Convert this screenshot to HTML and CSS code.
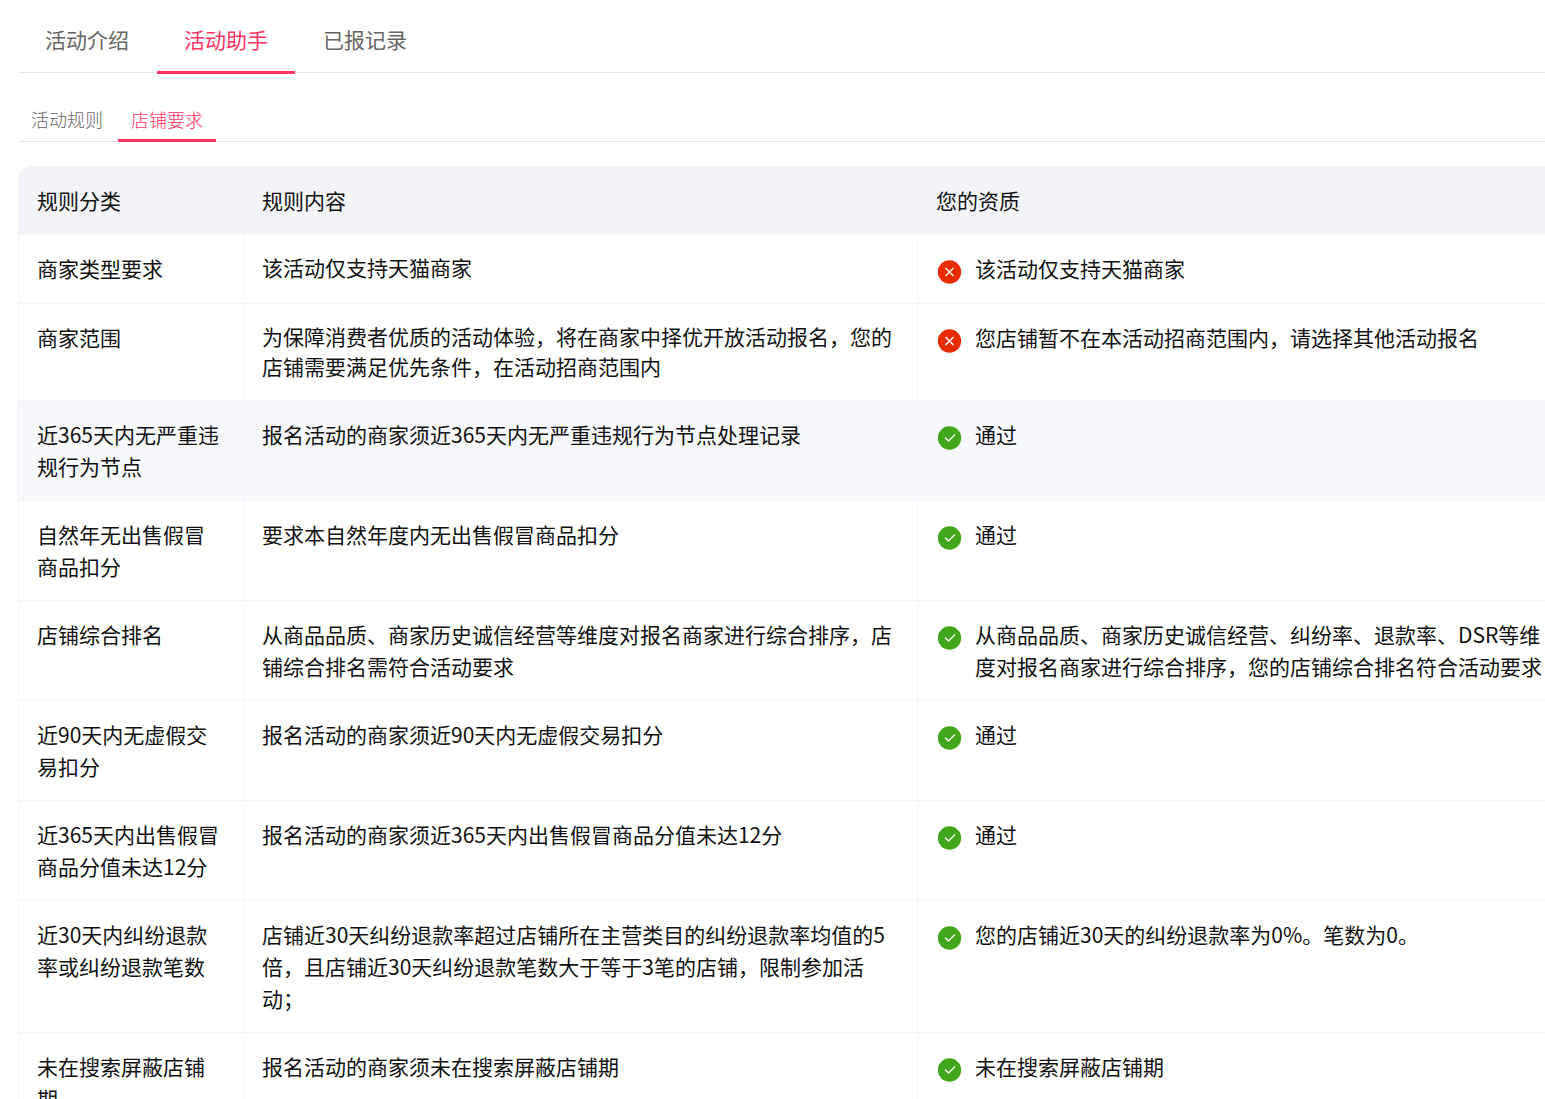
FILE: index.html
```html
<!DOCTYPE html>
<html lang="zh-CN">
<head>
<meta charset="utf-8">
<meta name="viewport" content="width=device-width, initial-scale=1">
<title>活动助手</title>
<link rel="stylesheet" href="styles.css">
</head>
<body>
<svg class="sprite" aria-hidden="true">
  <symbol id="fail" viewBox="0 0 24 24"><circle cx="11.500" cy="12" r="11.700" fill="#e62c00"/><path d="M7.500 8l8 8M15.500 8l-8 8" fill="none" stroke="#fff" stroke-width="1.4"/></symbol>
  <symbol id="pass" viewBox="0 0 24 24"><circle cx="11.500" cy="12" r="11.700" fill="#41a71a"/><path d="M7 11.500l3.500 3.500 6.500-6.500" fill="none" stroke="#fff" stroke-width="1.4"/></symbol>
</svg>
<main class="panel">
  <div class="tabs" role="tablist">
    <button class="tab" role="tab" type="button">活动介绍</button>
    <button class="tab active" role="tab" type="button" aria-selected="true">活动助手</button>
    <button class="tab" role="tab" type="button">已报记录</button>
  </div>
  <div class="tabs subtabs" role="tablist">
    <button class="tab" role="tab" type="button">活动规则</button>
    <button class="tab active" role="tab" type="button" aria-selected="true">店铺要求</button>
  </div>
  <table class="rules">
    <colgroup><col class="col-type"><col class="col-content"><col></colgroup>
    <thead>
      <tr><th scope="col">规则分类</th><th scope="col">规则内容</th><th scope="col">您的资质</th></tr>
    </thead>
    <tbody>
      <tr class="basic">
        <td>商家类型要求</td>
        <td>该活动仅支持天猫商家</td>
        <td><div class="result"><svg class="icon"><use href="#fail"/></svg><span>该活动仅支持天猫商家</span></div></td>
      </tr>
      <tr class="basic">
        <td>商家范围</td>
        <td>为保障消费者优质的活动体验，将在商家中择优开放活动报名，您的店铺需要满足优先条件，在活动招商范围内</td>
        <td><div class="result"><svg class="icon"><use href="#fail"/></svg><span>您店铺暂不在本活动招商范围内，请选择其他活动报名</span></div></td>
      </tr>
      <tr class="hovered">
        <td>近365天内无严重违规行为节点</td>
        <td>报名活动的商家须近365天内无严重违规行为节点处理记录</td>
        <td><div class="result"><svg class="icon"><use href="#pass"/></svg><span>通过</span></div></td>
      </tr>
      <tr>
        <td>自然年无出售假冒商品扣分</td>
        <td>要求本自然年度内无出售假冒商品扣分</td>
        <td><div class="result"><svg class="icon"><use href="#pass"/></svg><span>通过</span></div></td>
      </tr>
      <tr>
        <td>店铺综合排名</td>
        <td>从商品品质、商家历史诚信经营等维度对报名商家进行综合排序，店铺综合排名需符合活动要求</td>
        <td><div class="result"><svg class="icon"><use href="#pass"/></svg><span>从商品品质、商家历史诚信经营、纠纷率、退款率、DSR等维度对报名商家进行综合排序，您的店铺综合排名符合活动要求</span></div></td>
      </tr>
      <tr>
        <td>近90天内无虚假交易扣分</td>
        <td>报名活动的商家须近90天内无虚假交易扣分</td>
        <td><div class="result"><svg class="icon"><use href="#pass"/></svg><span>通过</span></div></td>
      </tr>
      <tr>
        <td>近365天内出售假冒商品分值未达12分</td>
        <td>报名活动的商家须近365天内出售假冒商品分值未达12分</td>
        <td><div class="result"><svg class="icon"><use href="#pass"/></svg><span>通过</span></div></td>
      </tr>
      <tr>
        <td>近30天内纠纷退款率或纠纷退款笔数</td>
        <td>店铺近30天纠纷退款率超过店铺所在主营类目的纠纷退款率均值的5倍，且店铺近30天纠纷退款笔数大于等于3笔的店铺，限制参加活动；</td>
        <td><div class="result"><svg class="icon"><use href="#pass"/></svg><span>您的店铺近30天的纠纷退款率为0%。笔数为0。</span></div></td>
      </tr>
      <tr>
        <td>未在搜索屏蔽店铺期</td>
        <td>报名活动的商家须未在搜索屏蔽店铺期</td>
        <td><div class="result"><svg class="icon"><use href="#pass"/></svg><span>未在搜索屏蔽店铺期</span></div></td>
      </tr>
    </tbody>
  </table>
</main>
</body>
</html>
```
FILE: styles.css
```css
* { box-sizing: border-box; }

body {
  margin: 0;
  background: #fff;
  color: #111;
  font: 400 21px/32px "Noto Sans CJK SC", sans-serif;
}

.sprite { position: absolute; width: 0; height: 0; }

.panel {
  height: 100vh;
  overflow: hidden;
  padding: 8px 0 0 18px;
}

.tabs {
  display: flex;
  align-items: flex-start;
  gap: 1px;
  height: 65px;
  box-shadow: inset 0 -1px #e6e7eb;
}

.tab {
  height: 66px;
  padding: 0 27px 2px;
  border: 0;
  border-bottom: 3px solid transparent;
  background: none;
  color: #666;
  font: inherit;
  white-space: nowrap;
  cursor: pointer;
}

.tab.active {
  border-bottom-color: #ff335f;
  color: #ff335f;
}

.subtabs {
  gap: 2px;
  height: 44px;
  margin: 25px 0 24px;
}

.subtabs .tab {
  height: 44px;
  padding: 0 13px;
  font-size: 18px;
  font-weight: 300;
}

.rules {
  width: 100%;
  table-layout: fixed;
  border-collapse: separate;
  border-spacing: 0;
}

.col-type { width: 225px; }
.col-content { width: 674px; }

.rules th {
  padding: 18px 18px 19px 19px;
  background: #f2f4f8;
  font-weight: 400;
  text-align: left;
}

.rules th:first-child { border-top-left-radius: 14px; }

.rules td {
  padding: 17px 18px 18px;
  border-left: 1px solid #f2f4f8;
  border-bottom: 1px solid #f2f4f8;
  vertical-align: top;
}

.rules td:last-child {
  padding-left: 20px;
  padding-right: 0;
}

.rules .basic td { padding-bottom: 19px; }
.rules .basic td:nth-child(2) { line-height: 30px; }

.hovered { background: #f7f8fc; }

.result {
  display: flex;
  align-items: flex-start;
  gap: 13px;
}

.icon {
  flex: none;
  width: 24px;
  height: 24px;
  margin-top: 8px;
}
```
